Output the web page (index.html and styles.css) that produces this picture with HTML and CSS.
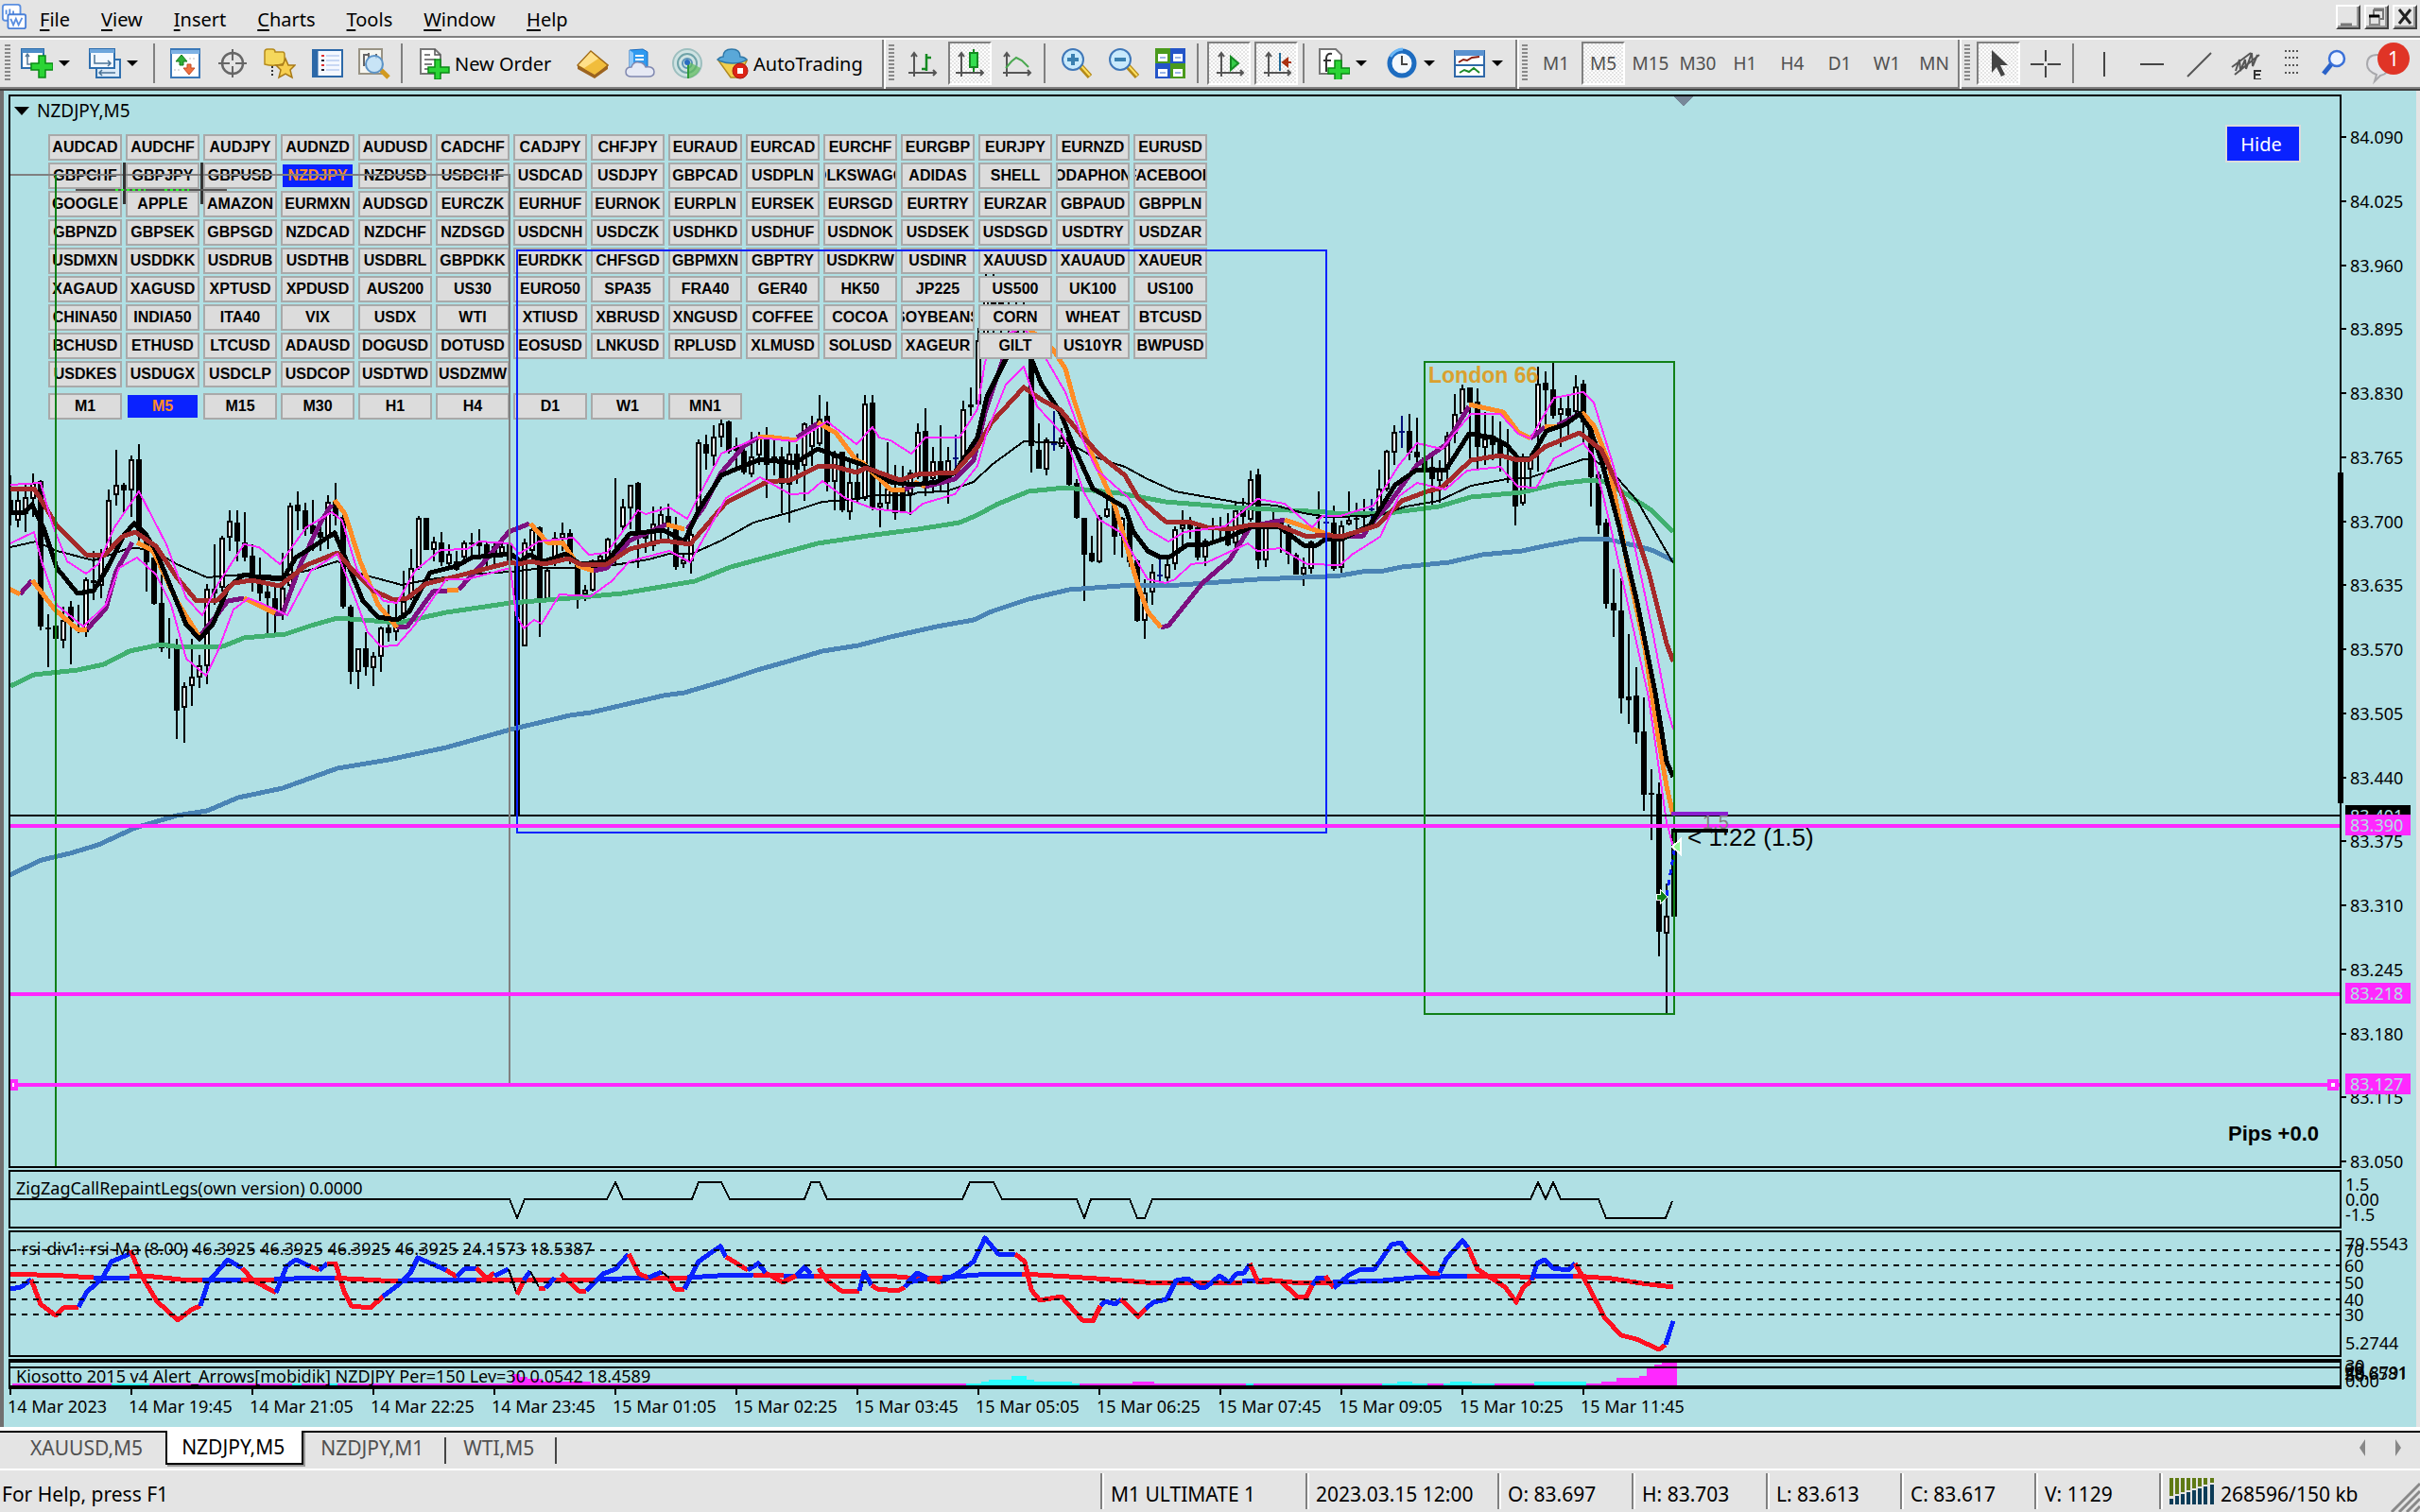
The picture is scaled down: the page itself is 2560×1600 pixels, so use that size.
FILE: index.html
```html
<!DOCTYPE html>
<html lang="en">
<head>
    <meta charset="UTF-8">
    <meta name="viewport" content="width=device-width, initial-scale=1.0">
    <title>NZDJPY,M5</title>
    <link rel="stylesheet" href="styles.css">
</head>
<body>
    <header class="menubar">
        <svg class="app-icon" viewBox="0 0 30 30"><rect x="2" y="1" width="20" height="18" rx="3" fill="#fff" stroke="#5b8fe0" stroke-width="2"/><path d="M6 12v-5M10 14V6M14 12V8" stroke="#5b8fe0" stroke-width="2"/><rect x="8" y="12" width="20" height="16" rx="2" fill="#fff" stroke="#4a80d8" stroke-width="2"/><path d="M11 17l3 7 3-7 3 7 4-8" fill="none" stroke="#5b8fe0" stroke-width="2"/></svg>
        <nav class="menu">
            <button><u>F</u>ile</button>
            <button><u>V</u>iew</button>
            <button><u>I</u>nsert</button>
            <button><u>C</u>harts</button>
            <button><u>T</u>ools</button>
            <button><u>W</u>indow</button>
            <button><u>H</u>elp</button>
        </nav>
        <div class="window-buttons">
            <button aria-label="Minimize"><svg viewBox="0 0 22 22"><path d="M3 19h12" stroke="#777" stroke-width="3"/></svg></button>
            <button aria-label="Restore"><svg viewBox="0 0 22 22"><path d="M8 9V4h10v9h-4" fill="none" stroke="#777" stroke-width="2"/><path d="M8 3h11" stroke="#777" stroke-width="3"/><path d="M4 10h10v9H4z" fill="none" stroke="#888" stroke-width="2"/><path d="M3 10h11" stroke="#000" stroke-width="3"/></svg></button>
            <button aria-label="Close"><svg viewBox="0 0 22 22"><path d="M5 3l12 15M17 3L5 18" stroke="#222" stroke-width="3"/></svg></button>
        </div>
    </header>

    <div class="toolbar">
        <div class="group">
            <span class="grip"></span>
            <button class="drop" aria-label="New chart"><svg class="icon" viewBox="0 0 34 34"><rect x="1" y="2" width="23" height="20" fill="#fff" stroke="#2f6fae" stroke-width="2"/><path d="M1 4h23" stroke="#4d8cc8" stroke-width="4"/><path d="M7 8v10h12M5 10l2-3 2 3" fill="none" stroke="#557a9a" stroke-width="1.5"/><path d="M19 9h7v8h8v7h-8v8h-7v-8h-8v-7h8z" fill="#2bd435" stroke="#0a8a14" stroke-width="1.5"/></svg></button>
            <button class="drop" aria-label="Profiles"><svg class="icon" viewBox="0 0 34 34"><rect x="8" y="13" width="25" height="19" fill="#dcebf8" stroke="#2f6fae" stroke-width="2"/><rect x="1" y="2" width="26" height="20" fill="#f2f8ff" stroke="#2f6fae" stroke-width="2"/><path d="M1 4h26" stroke="#6ea6dc" stroke-width="4"/><path d="M6 8v9h17M20 14l3 3-3 3M12 27h16M14 24l-3 3 3 3" fill="none" stroke="#4a7396" stroke-width="1.5"/></svg></button>
            <span class="sep"></span>
            <button aria-label="Market Watch"><svg class="icon" viewBox="0 0 34 34"><rect x="2" y="2" width="30" height="30" fill="#fff" stroke="#3b78b8" stroke-width="2"/><path d="M2 5h30" stroke="#7eb2e4" stroke-width="4"/><path d="M13 8l6 7h-4v4h-4v-4H7z" fill="#2fae36" stroke="#177a1d"/><path d="M21 29l-6-7h4v-4h4v4h4z" fill="#f07040" stroke="#c44a20"/><path d="M21 12h8M5 24h7" stroke="#bbb" stroke-dasharray="2 2"/></svg></button>
            <button aria-label="Crosshair"><svg class="icon" viewBox="0 0 34 34"><circle cx="17" cy="17" r="11" fill="none" stroke="#666" stroke-width="2.5"/><path d="M17 2v12M17 20v12M2 17h12M20 17h12" stroke="#666" stroke-width="2"/></svg></button>
            <button aria-label="Navigator"><svg class="icon" viewBox="0 0 34 34"><path d="M1 5q0-3 3-3h5q3 0 3 3h8q2 0 2 3v9q-11 4-21 1z" fill="#f5d85c" stroke="#b58a1c" stroke-width="1.5"/><path d="M9 20v11" stroke="#333" stroke-dasharray="2 2" stroke-width="2"/><path d="M23 12l3 7h7l-5 5 2 8-7-4-7 4 2-8-5-5h7z" fill="#f7cf50" stroke="#a87a18" stroke-width="1.5"/></svg></button>
            <button aria-label="Data Window"><svg class="icon" viewBox="0 0 34 34"><rect x="2" y="3" width="31" height="28" fill="#f4f8ff" stroke="#2c68a8" stroke-width="2"/><path d="M5 3v28" stroke="#2c68a8" stroke-width="5"/><path d="M11 9h3M11 19h3" stroke="#e03030" stroke-width="2"/><path d="M11 14h3M11 24h3" stroke="#223" stroke-width="2"/><path d="M16 9h14M16 14h14M16 19h14M16 24h14" stroke="#9bb6e8"/></svg></button>
            <button aria-label="Strategy Tester"><svg class="icon" viewBox="0 0 34 34"><rect x="1" y="2" width="24" height="26" fill="#f6f6f0" stroke="#999384" stroke-width="2"/><path d="M6 7v13M11 6v5M19 7v5M6 8h4" stroke="#666" stroke-width="2"/><path d="M24 24l8 8" stroke="#d29a20" stroke-width="5"/><ellipse cx="17" cy="18" rx="9" ry="9" fill="#bfe0f7" fill-opacity=".85" stroke="#5c94c8" stroke-width="2"/></svg></button>
            <span class="sep"></span>
            <button class="order"><svg class="icon" viewBox="0 0 34 34"><path d="M3 2h15l6 6v20H3z" fill="#fff" stroke="#777" stroke-width="2"/><path d="M18 2v6h6M7 8h6M7 13h12M7 18h8M7 23h5" fill="none" stroke="#555" stroke-width="1.5"/><path d="M18 13h6v8h9v6h-9v7h-6v-7h-7v-6h7z" fill="#2bd435" stroke="#0a8a14" stroke-width="1.5"/></svg>New Order</button>
            <button aria-label="MetaEditor"><svg class="icon" viewBox="0 0 34 34"><path d="M15 4L33 19 19 31 1 19z" fill="#f1bd3c" stroke="#a06a18" stroke-width="1.5"/><path d="M1 19v4l18 10 14-10v-4L19 29z" fill="#9c6420"/><path d="M15 5l8 7-15 10-6-3z" fill="#ffe08a"/></svg></button>
            <button aria-label="MetaQuotes"><svg class="icon" viewBox="0 0 34 34"><path d="M6 3l14-1 5 3v16H6z" fill="#2e9af0" stroke="#1a6cc0"/><path d="M6 3l4 3v15H6z" fill="#8cc8fa"/><path d="M12 9h9M12 13h9" stroke="#fff" stroke-width="2"/><path d="M8 31q-6 0-6-5t6-5q2-6 8-5 5 0 7 5 9-1 9 5 0 5-6 5z" fill="#e6e9f4" stroke="#8088b0" stroke-width="1.5"/></svg></button>
            <button aria-label="Signals"><svg class="icon" viewBox="0 0 34 34"><circle cx="17" cy="17" r="15" fill="#cfe3e3" stroke="#9dbfbf" stroke-width="2"/><circle cx="17" cy="17" r="10" fill="none" stroke="#6fa3a8" stroke-width="2"/><circle cx="17" cy="17" r="5" fill="none" stroke="#5a94b8" stroke-width="2"/><path d="M18 15v18q10-2 13-11z" fill="#5cba58" fill-opacity=".7"/><path d="M18 16v17" stroke="#2f9a38" stroke-width="2"/><circle cx="17" cy="16" r="3" fill="#2a6cc0"/></svg></button>
            <button class="order auto"><svg class="icon" viewBox="0 0 34 34"><path d="M2 14h30l-9 18h-8z" fill="#f2cf4c" stroke="#b08a20" stroke-width="1.5"/><path d="M1 13q3-3 6-3 0-8 9-8t9 8q4 0 7 3-5 4-15 4T1 13z" fill="#5aa8d8" stroke="#2f78a8" stroke-width="1.5"/><circle cx="25" cy="25" r="8" fill="#dd2416" stroke="#a81a10"/><path d="M22 22h6v6h-6z" fill="#fff"/></svg>AutoTrading</button>
        </div>
        <div class="group">
            <span class="grip"></span>
            <button aria-label="Bar chart"><svg class="icon" viewBox="0 0 34 34"><path d="M8 7v24M2 27h29M5 10l3-4 3 4M28 24l3 3-3 3" fill="none" stroke="#555" stroke-width="2"/><path d="M21 7v18M21 11h5M21 23h-5" stroke="#158a22" stroke-width="2.5"/></svg></button>
            <button class="pressed" aria-label="Candlesticks"><svg class="icon" viewBox="0 0 34 34"><path d="M8 7v24M2 27h29M5 10l3-4 3 4M28 24l3 3-3 3" fill="none" stroke="#555" stroke-width="2"/><path d="M21 2v24" stroke="#158a22" stroke-width="2"/><rect x="17" y="6" width="8" height="15" fill="#35dd50" stroke="#158a22" stroke-width="2"/></svg></button>
            <button aria-label="Line chart"><svg class="icon" viewBox="0 0 34 34"><path d="M6 7v24M2 27h29M3 10l3-4 3 4M28 24l3 3-3 3" fill="none" stroke="#555" stroke-width="2"/><path d="M5 22l6-7 5-4 6 3 7 7" fill="none" stroke="#4aa850" stroke-width="2"/></svg></button>
            <span class="sep"></span>
            <button aria-label="Zoom In"><svg class="icon" viewBox="0 0 34 34"><path d="M22 20l10 11" stroke="#b58a18" stroke-width="6"/><path d="M23 20l9 10" stroke="#ffe060" stroke-width="2"/><circle cx="14" cy="13" r="11" fill="#c8eafc" stroke="#4078b8" stroke-width="2"/><path d="M14 7v12M8 13h12" stroke="#3a80b0" stroke-width="4"/></svg></button>
            <button aria-label="Zoom Out"><svg class="icon" viewBox="0 0 34 34"><path d="M22 20l10 11" stroke="#b58a18" stroke-width="6"/><path d="M23 20l9 10" stroke="#ffe060" stroke-width="2"/><circle cx="14" cy="13" r="11" fill="#c8eafc" stroke="#4078b8" stroke-width="2"/><path d="M8 13h12" stroke="#3a80b0" stroke-width="4"/></svg></button>
            <button aria-label="Tile Windows"><svg class="icon" viewBox="0 0 34 34"><path d="M1 1h16v16H1z" fill="#4a9a1c"/><path d="M17 1h16v16H17z" fill="#2455c8"/><path d="M1 17h16v16H1z" fill="#2455c8"/><path d="M17 17h16v16H17z" fill="#4a9a1c"/><path d="M4 7h10v8H4zM20 7h10v8H20zM4 23h10v8H4zM20 23h10v8H20z" fill="#fff"/><path d="M6 11h6M22 11h6M6 27h6M22 27h6" stroke="#9bb6e8" stroke-width="2"/></svg></button>
            <span class="sep"></span>
            <button class="pressed" aria-label="Auto Scroll"><svg class="icon" viewBox="0 0 34 34"><path d="M9 7v24M4 27h28M6 10l3-4 3 4M29 24l3 3-3 3" fill="none" stroke="#555" stroke-width="2"/><path d="M19 10l8 7-8 7z" fill="#35cc48" stroke="#158a22" stroke-width="2"/></svg></button>
            <button class="pressed" aria-label="Chart Shift"><svg class="icon" viewBox="0 0 34 34"><path d="M9 7v24M4 27h28M6 10l3-4 3 4M29 24l3 3-3 3" fill="none" stroke="#555" stroke-width="2"/><path d="M21 6v19" stroke="#1d6a98" stroke-width="2"/><path d="M33 16h-7M29 12l-5 4 5 4z" fill="#e04818" stroke="#a83010" stroke-width="2"/></svg></button>
            <span class="sep"></span>
            <button class="drop" aria-label="Indicators"><svg class="icon" viewBox="0 0 34 34"><path d="M2 2h17l6 6v20H2z" fill="#fff" stroke="#777" stroke-width="2"/><path d="M15 7q-6-1-6 5v14M6 14h8" fill="none" stroke="#333" stroke-width="2"/><path d="M18 14h7v8h9v6h-9v7h-7v-7h-7v-6h7z" fill="#2bd435" stroke="#0a8a14" stroke-width="1.5"/></svg></button>
            <button class="drop" aria-label="Periods"><svg class="icon" viewBox="0 0 34 34"><circle cx="17" cy="17" r="13" fill="#f4f8fc" stroke="#1d6cc0" stroke-width="5"/><path d="M5 10q5-8 13-8" fill="none" stroke="#6ab8f8" stroke-width="3"/><path d="M17 9v9h6" fill="none" stroke="#444" stroke-width="2"/></svg></button>
            <button class="drop" aria-label="Templates"><svg class="icon" viewBox="0 0 34 34"><rect x="1" y="4" width="31" height="27" fill="#fff" stroke="#2f68a8" stroke-width="2"/><path d="M1 6h31" stroke="#5a92d0" stroke-width="6"/><path d="M1 19h31" stroke="#2f68a8" stroke-width="2"/><path d="M5 16l5-3 4 1 5-3 8-1" fill="none" stroke="#8a1c10" stroke-width="2"/><path d="M6 27l5-3 5 2 5-4 6 5" fill="none" stroke="#1c8a28" stroke-width="2"/></svg></button>
        </div>
        <div class="group periods">
            <span class="grip"></span>
            <button>M1</button><button class="pressed">M5</button><button>M15</button><button>M30</button><button>H1</button><button>H4</button><button>D1</button><button>W1</button><button>MN</button>
        </div>
        <div class="group">
            <span class="grip"></span>
            <button class="pressed" aria-label="Cursor"><svg class="icon" viewBox="0 0 34 34"><path d="M10 3v24l5-6 5 10 4-2-5-10h8z" fill="#444"/></svg></button>
            <button aria-label="Crosshair"><svg class="icon" viewBox="0 0 34 34"><path d="M17 3v12M17 20v12M1 18h14M19 18h14" stroke="#444" stroke-width="2"/></svg></button>
            <span class="sep"></span>
            <button aria-label="Vertical line"><svg class="icon" viewBox="0 0 34 34"><path d="M17 5v26" stroke="#444" stroke-width="2"/></svg></button>
            <button aria-label="Horizontal line"><svg class="icon" viewBox="0 0 34 34"><path d="M5 18h25" stroke="#444" stroke-width="2"/></svg></button>
            <button aria-label="Trendline"><svg class="icon" viewBox="0 0 34 34"><path d="M5 31L30 6" stroke="#555" stroke-width="2"/></svg></button>
            <button aria-label="Equidistant channel"><svg class="icon" viewBox="0 0 34 34"><path d="M2 21L22 6M5 29L31 8M6 25l4-12 1 12 5-12 1 10 6-17 1 14 5-12" fill="none" stroke="#555" stroke-width="2"/><path d="M33 25h-7v9h7M26 29h6" fill="none" stroke="#333" stroke-width="2"/></svg></button>
            <button class="narrow" aria-label="Fibonacci"><svg class="icon" viewBox="0 0 34 34"><path d="M10 4h15M10 11h15M10 19h15M10 27h15" stroke="#555" stroke-width="2" stroke-dasharray="2 2"/></svg></button>
            <button class="narrow" aria-label="Search"><svg class="icon" viewBox="0 0 34 34"><path d="M14 17L5 28" stroke="#2a62c8" stroke-width="5"/><circle cx="19" cy="12" r="8" fill="#eef4ff" stroke="#3a70d8" stroke-width="2.5"/></svg></button>
            <button class="chat" aria-label="Messages"><svg viewBox="0 0 50 46"><path d="M12 42l2-7q-10-4-10-11 0-10 11-10t13 9q0 11-10 13z" fill="#e4e4e8" stroke="#a8a8ac" stroke-width="2"/><ellipse cx="32" cy="18" rx="17" ry="17" fill="#e03426"/><text x="32" y="26" text-anchor="middle" class="badge-text">1</text></svg></button>
        </div>
    </div>

    <main class="chart-window">
        <section class="pane">
            <svg class="plot" id="priceBack" viewBox="11 102 2464 1132" preserveAspectRatio="none">
                <g id="candles"></g>
                <g id="averages"></g>
            </svg>
            <h1 class="chart-title">NZDJPY,M5</h1>
            <div class="symbols" id="symbols"></div>
            <button class="hide-button">Hide</button>
            <div class="pips">Pips +0.0</div>
            <svg class="plot front" viewBox="11 102 2464 1132" preserveAspectRatio="none">
                <path d="M1771 102h20l-10 11z" fill="#778899"/>
                <path d="M11 863H2475" class="bid"/>
                <path d="M11 185H539V1147" class="grey"/>
                <path d="M59 185V1235" class="session green"/>
                <path d="M131 172v44M213 172v44" stroke="#333" stroke-width="3"/>
                <path d="M80 201h160" stroke="#555" stroke-width="2"/>
                <path d="M122 201h32M174 201h26" stroke="#28ff28" stroke-width="2" stroke-dasharray="3 3"/>
                <rect x="547" y="265" width="856" height="616" class="session blue"/>
                <rect x="1507" y="383" width="264" height="690" class="session green"/>
                <path d="M11 874H2475M11 1052H2475M11 1148H2475" class="level"/>
                <path d="M11 1144h6v8h-6zM2464 1144h8v8h-8z" fill="#fff" stroke="#ff28ff" stroke-width="4"/>
                <path d="M1768 861h60" stroke="#8a1fd0" stroke-width="4"/>
                <path d="M1769 879h59" stroke="#000" stroke-width="4"/>
                <path d="M1763 948l8-48" stroke="#0a22ff" stroke-width="3" stroke-dasharray="6 5"/>
                <path d="M1752 946h4v-5l8 8-8 8v-5h-4z" fill="#108018" stroke="#fff" stroke-width="1"/>
                <path d="M1769 896l9-8v16z" fill="#98fb98" stroke="#fff" stroke-width="2"/>
                <text x="1511" y="405" class="london">London 66</text>
                <text x="1801" y="877" class="small-note">1.5</text>
                <text x="1785" y="895" class="note">&lt; 1:22 (1.5)</text>
            </svg>
        </section>
        <aside class="axis price-axis" id="priceAxis">
            <span class="range-bar"></span>
            <span class="tag tag-bid">83.401</span>
            <span class="tag tag-a">83.390</span>
            <span class="tag tag-b">83.218</span>
            <span class="tag tag-c">83.127</span>
        </aside>

        <section class="pane">
            <svg class="plot" id="zigzag" viewBox="11 1240 2464 58" preserveAspectRatio="none"></svg>
            <p class="pane-label">ZigZagCallRepaintLegs(own version) 0.0000</p>
        </section>
        <aside class="axis zig-axis"><span>1.5</span><span>0.00</span><span>-1.5</span></aside>

        <section class="pane">
            <svg class="plot" id="rsi" viewBox="11 1304 2464 130" preserveAspectRatio="none"></svg>
            <p class="pane-label">-rsi-div1:-rsi-Ma (8.00) 46.3925 46.3925 46.3925 46.3925 24.1573 18.5387</p>
        </section>
        <aside class="axis">
            <svg class="axis-text" viewBox="0 0 79 134">
                <text x="4" y="21">79.5543</text><text x="3" y="28">70</text><text x="3" y="44">60</text><text x="3" y="62">50</text><text x="3" y="80">40</text><text x="3" y="96">30</text><text x="4" y="126">5.2744</text>
            </svg>
        </aside>

        <section class="pane histogram">
            <svg class="plot" id="kiosotto" viewBox="11 1442 2464 24" preserveAspectRatio="none"></svg>
            <p class="pane-label">Kiosotto 2015 v4 Alert_Arrows[mobidik] NZDJPY Per=150 Lev=30 0.0542 18.4589</p>
        </section>
        <aside class="axis">
            <svg class="axis-text" viewBox="0 0 79 32">
                <text x="4" y="14">30</text><text x="3" y="17">60</text><text x="4" y="21">40.8791</text><text x="3" y="22">28.6581</text><text x="4" y="24">50</text><text x="4" y="30">0.00</text>
            </svg>
        </aside>

        <ol class="time-axis">
            <li>14 Mar 2023</li><li>14 Mar 19:45</li><li>14 Mar 21:05</li><li>14 Mar 22:25</li><li>14 Mar 23:45</li><li>15 Mar 01:05</li><li>15 Mar 02:25</li><li>15 Mar 03:45</li><li>15 Mar 05:05</li><li>15 Mar 06:25</li><li>15 Mar 07:45</li><li>15 Mar 09:05</li><li>15 Mar 10:25</li><li>15 Mar 11:45</li>
        </ol>
    </main>

    <nav class="tabs">
        <button>XAUUSD,M5</button>
        <button class="active">NZDJPY,M5</button>
        <button>NZDJPY,M1</button>
        <button>WTI,M5</button>
        <span class="tab-scroll"><svg viewBox="0 0 50 20"><path d="M8 1v18L2 10zM40 1v18l6-9z" fill="#888"/></svg></span>
    </nav>

    <footer class="statusbar">
        <span class="help">For Help, press F1</span>
        <span class="cell profile">M1 ULTIMATE 1</span>
        <span class="cell date">2023.03.15 12:00</span>
        <span class="cell">O: 83.697</span>
        <span class="cell">H: 83.703</span>
        <span class="cell">L: 83.613</span>
        <span class="cell">C: 83.617</span>
        <span class="cell volume">V: 1129</span>
        <span class="cell traffic">
            <svg viewBox="0 0 48 28"><path d="M2 0v19M8 0v17M14 0v15M20 0v13M26 0v11M32 0v9M38 0v7M45 0v5" stroke="#5f7a14" stroke-width="4"/><path d="M2 28v-6M8 28v-9M14 28v-11M20 28v-13M26 28v-15M32 28v-17M38 28v-19M45 28V7" stroke="#0c3c58" stroke-width="4"/></svg>
            268596/150 kb
        </span>
        <svg class="size-grip" viewBox="0 0 32 32"><path d="M2 32L32 2M10 32L32 10M18 32l14-14M26 32l6-6" stroke="#888" stroke-width="3"/></svg>
    </footer>

    <script src="script.js"></script>
</body>
</html>
```
FILE: styles.css
```css
* {
    box-sizing: border-box;
}
body {
    display: flex;
    flex-direction: column;
    height: 100vh;
    margin: 0;
    overflow: hidden;
    background-color: #e4e4e4;
    color: #000;
    font-family: "Noto Sans", "DejaVu Sans", sans-serif;
    font-size: 20px;
}
button {
    margin: 0;
    padding: 0;
    border: none;
    background: none;
    color: inherit;
    font: inherit;
}

/* Menu */
.menubar {
    display: flex;
    align-items: center;
    height: 42px;
    border-bottom: 2px solid #fff;
    box-shadow: inset 0 -2px #808080;
}
.app-icon {
    width: 28px;
    height: 30px;
    margin: 0 0 4px 1px;
}
.menu {
    display: flex;
    flex: 1;
}
.menu button {
    padding: 2px 17px 0 16px;
    line-height: 38px;
}
.menu button:first-child {
    padding-left: 13px;
}
.menu u {
    text-underline-offset: 3px;
}
.window-buttons {
    display: flex;
    gap: 4px;
    padding: 0 3px 4px 0;
}
.window-buttons button {
    width: 26px;
    height: 26px;
    border: 2px solid;
    border-color: #fff #444 #444 #fff;
    box-shadow: inset -2px -2px #999;
}
.window-buttons svg {
    display: block;
    width: 22px;
    height: 22px;
}

/* Toolbar */
.toolbar {
    display: flex;
    height: 54px;
    border-bottom: 2px solid #404040;
    box-shadow: inset 0 -2px #808080;
}
.group {
    display: flex;
    align-items: center;
    padding-bottom: 2px;
    border-right: 2px solid #808080;
    box-shadow: 2px 0 #fff;
}
.group:last-child {
    flex: 1;
    border-right: none;
}
.grip {
    width: 6px;
    height: 40px;
    margin: 0 4px 0 5px;
    background: repeating-linear-gradient(#888 0 2px, transparent 2px 4px);
}
.group + .group .grip {
    margin: 0 5px;
}
.group button {
    display: flex;
    align-items: center;
    justify-content: center;
    width: 46px;
    height: 46px;
    margin: 0 2px;
}
.group .narrow {
    margin: 0;
}
.group .drop {
    justify-content: flex-start;
    width: 72px;
    margin: 0;
    padding-left: 7px;
}
.drop::after {
    content: "";
    margin-left: 6px;
    border: 6px solid transparent;
    border-top-color: #000;
    border-bottom: none;
}
.group .order {
    justify-content: flex-start;
    gap: 5px;
    width: auto;
    min-width: 165px;
    padding-left: 7px;
}
.group .auto {
    min-width: 177px;
    padding-left: 4px;
}
.group .pressed {
    border: 2px solid;
    border-color: #808080 #fff #fff #808080;
    background: repeating-conic-gradient(#fff 0 25%, #e4e4e4 0 50%) 0 0 / 4px 4px;
}
.icon {
    flex: none;
    width: 34px;
    height: 34px;
}
.sep {
    width: 2px;
    height: 42px;
    margin: 0 7px 0 3px;
    background-color: #808080;
}
.periods {
    color: #505050;
    font-size: 19px;
}
.group .chat {
    width: 50px;
    margin: 0 10px 0 auto;
}
.chat svg {
    width: 50px;
    height: 46px;
}
.badge-text {
    fill: #fff;
    font-size: 21px;
}

/* Chart window */
.chart-window {
    display: grid;
    flex: 1;
    grid-template-columns: 1fr 79px;
    grid-template-rows: 1fr 62px 134px 32px 38px;
    row-gap: 2px;
    min-height: 0;
    padding: 4px 0 0 5px;
    border: solid #707070;
    border-width: 0 4px 0 4px;
    border-right-color: #e4e4e4;
    background-color: #b0e0e4;
}
.pane {
    position: relative;
    border: 2px solid #000;
}
.histogram {
    border-width: 4px 2px;
}
.plot {
    position: absolute;
    inset: 0;
    width: 100%;
    height: 100%;
    shape-rendering: crispEdges;
}
.front {
    pointer-events: none;
}
.chart-title {
    position: absolute;
    top: 2px;
    left: 4px;
    display: flex;
    align-items: center;
    gap: 8px;
    margin: 0;
    font-size: 19px;
    font-weight: normal;
    line-height: 26px;
}
.chart-title::before {
    content: "";
    border: 8px solid transparent;
    border-top: 9px solid #000;
    border-bottom: none;
}
.symbols {
    position: absolute;
    top: 40px;
    left: 40px;
    display: grid;
    grid-template-columns: repeat(15, 78px);
    gap: 2px 4px;
    font: bold 16px "Liberation Sans", Arial, sans-serif;
}
.symbols button {
    display: flex;
    align-items: center;
    justify-content: center;
    height: 28px;
    overflow: hidden;
    border: 2px solid #a9a9a9;
    background-color: #dcdcdc;
    white-space: nowrap;
}
.symbols .active {
    border-color: #b0e0e4;
    background-color: #0a22ff;
    color: #ff8c26;
}
.symbols span {
    flex: none;
}
.symbols .first-period {
    grid-column: 1;
}
.symbols .period {
    margin-top: 4px;
}
.hide-button {
    position: absolute;
    top: 30px;
    right: 41px;
    width: 80px;
    height: 40px;
    padding-right: 4px;
    border: 2px solid #dcdcdc;
    background-color: #0a22ff;
    color: #fff;
}
.pips {
    position: absolute;
    right: 22px;
    bottom: 20px;
    font: bold 22px/28px "Liberation Sans", Arial, sans-serif;
}
.bid,
.grey {
    fill: none;
    stroke: #000;
    stroke-width: 2;
}
.grey {
    stroke: #808080;
}
.session {
    fill: none;
    stroke-width: 2;
}
.blue {
    stroke: #0a22ff;
}
.green {
    stroke: #108018;
}
.level {
    stroke: #ff28ff;
    stroke-width: 4;
}
.london {
    fill: #daa02e;
    font: bold 23px "Liberation Sans", Arial, sans-serif;
}
.note,
.small-note {
    font: 26px "Liberation Sans", Arial, sans-serif;
}
.small-note {
    fill: #808080;
    font-size: 20px;
}
.pane-label {
    position: absolute;
    top: 5px;
    left: 6px;
    margin: 0;
    font-size: 18px;
    line-height: 24px;
    white-space: nowrap;
}
.histogram .pane-label {
    top: 2px;
}

/* Candles and averages */
.wick,
.bear {
    fill: #000;
}
.bull {
    fill: #fff;
    stroke: #000;
    stroke-width: 2;
}
.doji {
    fill: #00107a;
}
.series {
    fill: none;
    stroke-linejoin: round;
}

/* Axes */
.axis {
    position: relative;
    font-size: 18px;
}
.price-axis {
    display: flex;
    flex-direction: column;
    justify-content: space-between;
    padding: 34px 0 0 0;
    margin-bottom: -4px;
}
.price-label {
    display: flex;
    align-items: center;
    gap: 4px;
    height: 22px;
    line-height: 22px;
}
.price-label::before {
    content: "";
    width: 5px;
    height: 2px;
    background-color: #000;
}
.range-bar {
    position: absolute;
    top: 400px;
    left: -4px;
    width: 6px;
    height: 350px;
    background-color: #000;
}
.tag {
    position: absolute;
    left: 4px;
    width: 69px;
    height: 22px;
    padding-left: 5px;
    background-color: #ff28ff;
    color: #b0e0e4;
    line-height: 22px;
}
.tag-bid {
    top: 752px;
    background-color: #000;
}
.tag-a {
    top: 762px;
}
.tag-b {
    top: 940px;
}
.tag-c {
    top: 1036px;
}
.zig-axis {
    display: flex;
    flex-direction: column;
    padding: 7px 0 0 4px;
    line-height: 16px;
}
.axis-text {
    display: block;
    width: 79px;
    height: 100%;
}
.time-axis {
    display: flex;
    grid-column: 1 / -1;
    margin: -2px 0 0 0;
    padding: 0 0 0 1px;
    list-style: none;
    font-size: 18px;
}
.time-axis li {
    position: relative;
    width: 128px;
    padding-top: 5px;
    line-height: 26px;
    text-indent: -2px;
    white-space: nowrap;
}
.time-axis li::before {
    content: "";
    position: absolute;
    top: 0;
    left: 0;
    width: 2px;
    height: 6px;
    background-color: #000;
}

/* Chart tabs */
.tabs {
    display: flex;
    align-items: flex-start;
    height: 46px;
    padding: 0 0 0 4px;
    border-top: 4px solid #fff;
    border-bottom: 2px solid #fff;
    box-shadow: inset 0 2px #000;
    color: #505050;
    font-size: 21px;
}
.tabs button {
    position: relative;
    height: 36px;
    padding: 0 24px 0 18px;
    line-height: 34px;
}
.tabs button:first-child {
    padding-left: 28px;
}
.tabs .active {
    padding: 0 18px 0 15px;
    border: 2px solid #000;
    border-top: none;
    background-color: #fff;
    box-shadow: 2px 2px #999;
    color: #000;
}
.tabs .active + button::after,
.tabs .active + button + button::after {
    content: "";
    position: absolute;
    top: 7px;
    right: 0;
    width: 2px;
    height: 28px;
    background-color: #444;
}
.tab-scroll {
    margin: 8px 16px 0 auto;
}
.tab-scroll svg {
    display: block;
    width: 50px;
    height: 20px;
}

/* Status bar */
.statusbar {
    position: relative;
    display: flex;
    align-items: center;
    height: 44px;
    font-size: 21px;
}
.help {
    flex: 1;
    padding: 5px 0 0 2px;
}
.cell {
    display: flex;
    align-items: center;
    gap: 6px;
    width: 142px;
    height: 38px;
    padding: 5px 0 0 9px;
    border-left: 2px solid #808080;
    box-shadow: inset 2px 0 #fff;
    white-space: nowrap;
}
.profile {
    width: 217px;
}
.date {
    width: 203px;
}
.volume {
    width: 132px;
}
.traffic {
    width: 276px;
}
.traffic svg {
    width: 48px;
    height: 28px;
    margin-bottom: 6px;
}
.size-grip {
    position: absolute;
    right: 0;
    bottom: 0;
    width: 32px;
    height: 32px;
}
```
FILE: script.js
```javascript
const SVG = 'http://www.w3.org/2000/svg';

// origin x, origin y, units per pixel in x and y
const PARTS = {
    a: [0, 440, 1.823, 2.8],
    b: [700, 340, 2.063, 3],
    c: [1380, 360, 2.613, 2.119],
    d: [0, 1220, 1.568, 3],
    e: [960, 1220, 1.867, 3]
};

// type high top bottom low   (w = up, k = down, n = flat)
const BARS = {
    a: `k 175 250 290 325|w 222 250 312 330|w 205 240 290 345|w 172 200 245 300|k 190 192 625 635|k 588 626 633 745|k 540 622 660 662|w 565 605 665 690|k 548 565 610 735|k 560 626 633 645|w 480 485 640 655|k 400 488 496 545|w 395 405 505 540|w 218 248 400 405|w 100 203 235 265|k 200 203 222 290|w 118 130 222 300|k 85 130 355 370|k 350 355 435 520|k 415 420 558 560|k 470 555 690 700|k 600 684 690 720|k 660 690 873 957|w 790 802 866 968|w 660 773 800 860|w 708 740 775 805|w 498 512 742 795|k 380 512 525 560|w 355 360 510 520|w 280 310 362 400|k 280 315 373 430|k 285 375 420 430|k 380 413 480 520|k 420 490 525 550|k 490 522 540 645|k 500 540 587 645|w 405 510 590 605|w 258 265 505 510|k 225 263 284 340|k 258 280 335 355|k 250 325 350 400|k 310 345 360 400|w 235 255 360 395|k 200 255 298 325|k 295 300 565 570|k 560 566 760 795|w 688 690 760 810|k 640 690 745 770|w 700 712 748 800|w 625 628 715 760|k 560 628 643 668|w 545 625 640 665|w 460 550 600 610|w 395 450 540 545|w 297 303 452 455|k 303 303 397 397|w 358 372 397 430|k 345 375 435 445|w 380 410 440 450|k 400 430 455 460|w 370 375 420 440|k 348 375 381 420|k 335 375 385 420|k 375 380 410 450|k 375 385 410 440|w 376 385 410 420|k 376 380 440 445|k 400 430 1185 1185|w 365 375 682 684|w 320 335 400 440|k 328 330 545 655|w 450 455 545 546|w 345 360 420 445|w 315 348 365 400|k 337 348 430 440|k 425 430 535 570|w 500 516 530 548|w 425 430 518 520|w 410 415 440 450|w 362 365 430 435|k 185 408 412 440|w 245 270 330 345|w 203 203 275 335|k 195 200 350 450|k 340 345 365 405|w 270 320 385 400|w 270 290 330 375|k 260 297 325 370|k 300 330 448 455|w 410 425 440 450|w 345 350 430 468`,
    b: `w 375 385 600 600|k 360 390 420 470|w 330 367 430 460|w 312 325 370 400|k 314 318 415 420|k 370 395 410 470|k 395 410 480 485|w 350 430 485 495|w 350 370 425 455|k 335 375 455 560|k 370 430 440 490|k 400 430 515 610|w 370 420 520 640|k 390 420 470 515|w 322 325 460 570|w 300 330 400 460|w 235 308 390 395|k 255 300 510 540|w 410 430 510 600|k 414 415 600 605|w 450 510 605 630|k 420 510 565 575|w 235 260 565 570|k 235 258 592 600|w 480 575 590 655|w 385 530 578 600|k 455 530 608 630|k 460 535 608 610|w 470 480 550 615|w 325 350 495 500|k 275 348 520 555|w 400 445 500 545|k 330 445 505 540|w 400 440 510 580|n 360 433 437 480|w 253 280 440 445|k 210 264 273 300|w 20 60 265 270|w -160 -130 60 120|k -160 -120 0 60|w -80 -60 20 60|k -60 -40 30 60|w -80 -40 40 60|k -70 -30 30 60|k -40 40 395 480|k 325 408 468 468|w 368 375 470 490|n 285 388 392 412|w 340 368 400 405|k 360 365 520 522|k 500 512 625 628|k 624 625 742 887|k 680 735 762 765|w 615 620 765 768|w 540 595 622 625|k 570 580 685 740|w 620 625 680 750|k 635 640 765 780|k 755 760 952 954|w 820 860 952 1007|w 770 795 860 900|n 750 803 807 830|w 740 770 815 825|w 650 660 770 790|w 600 645 660 720|k 620 635 660 690|k 650 655 750 760|w 690 695 750 778|k 625 653 657 700|k 620 650 660 690|k 610 655 710 715|w 575 600 705 720|k 560 600 620 700|w 475 500 630 635|k 468 487 760 785|w 635 640 760 780|k 590 630 640 655|k 635 640 650 735|k 645 650 740 770|k 735 740 803 805|w 750 780 803 840|w 695 700 785 800`,
    c: `k 340 397 401 430|n 390 406 412 420|k 370 410 512 518|w 405 415 510 522|w 340 402 413 415|k 365 399 402 425|k 355 394 398 440|n 355 378 381 400|w 290 332 380 385|w 245 248 335 340|w 190 205 252 280|n 170 204 207 242|k 165 203 252 270|k 173 250 262 275|k 255 262 295 300|k 260 285 312 370|w 270 290 315 365|w 205 215 290 330|w 120 165 210 230|w 100 108 165 170|k 105 106 140 270|k 108 138 240 288|w 160 220 242 280|k 170 215 235 270|k 182 225 255 295|k 200 263 266 320|k 265 270 373 415|w 255 270 367 370|w 255 262 290 330|w 60 98 210 295|k 70 95 113 200|k 50 110 170 175|w 125 153 168 240|k 122 153 170 215|w 78 103 160 170|k 90 97 185 230|k 185 190 308 373|k 295 300 415 435|k 400 410 592 602|k 512 590 605 665|k 535 605 803 838|w 660 798 808 860|k 733 797 880 905|k 800 878 1020 1055|k 962 1014 1019 1122|k 992 1018 1326 1382|w 1218 1290 1330 1510|k 1095 1095 1292 1292`
};

const PURPLE = '#7d1080', ORANGE = '#ff8c26', PINK = '#ff28ff', RED = '#ff1020', BLUE = '#0a22ff';

// colour, width, points per part
const AVERAGES = [
    ['#4a84b5', 5, 'a 18,1362 80,1315 135,1297 190,1270 260,1220 340,1185 400,1170 460,1132 545,1102 650,1045 750,1020 860,982 985,930 1100,888 1140,880 1280,828 1320,820 1400,785 1460,752 b 275,1080 350,1048 430,1030 500,1002 600,970 680,948 720,920 800,882 890,853 1000,840 1130,838 1300,820 1450,810 c 100,527 160,520 220,518 270,508 400,497 490,480 600,472 660,463 770,445 830,445 920,462 960,470 1018,493'],
    ['#40b070', 5, 'a 20,800 65,768 150,752 200,735 250,698 310,677 350,685 430,683 470,658 550,648 600,622 650,600 770,612 860,583 985,555 1100,540 1200,525 1340,490 b 150,780 340,705 450,680 560,660 650,640 690,615 730,582 800,540 880,527 1000,545 1100,573 1250,592 1450,606 c 100,390 230,387 370,372 460,352 600,342 700,323 790,313 830,318 900,350 960,382 1018,430'],
    ['#000', 2, 'a 20,388 70,372 110,400 180,428 250,393 290,395 340,440 400,480 470,470 540,476 600,455 650,432 700,470 775,500 830,485 900,470 985,462 1050,450 1150,452 1250,425 1290,410 1335,410 b 130,695 200,640 280,605 350,573 430,565 460,553 545,553 560,543 620,540 680,510 720,455 790,380 890,387 940,430 1010,463 1060,502 1120,540 1260,577 1340,585 1400,610 1450,620 c 100,397 210,393 280,372 370,360 460,327 560,312 620,310 680,292 770,267 800,270 850,295 920,360 1018,500'],
    [PURPLE, 5, 'a 38,528 62,488'],
    [PURPLE, 5, 'a 168,632 205,570 225,460 255,375'],
    [PURPLE, 5, 'a 385,655 440,550 470,540'],
    [PURPLE, 5, 'a 530,585 545,585 580,440 620,310 640,262'],
    [PURPLE, 5, 'a 765,628 785,625 835,520 862,518'],
    [PURPLE, 5, 'a 885,515 930,440 980,345 1020,320'],
    [PURPLE, 5, 'a 1145,460 1170,450 1215,370 1285,322'],
    [PURPLE, 5, 'b 55,660 90,590 130,480 180,395 210,370'],
    [PURPLE, 5, 'b 295,370 340,325'],
    [PURPLE, 5, 'b 530,535 550,520'],
    [PURPLE, 5, 'b 575,525 640,500 680,440 705,290 745,120 770,30'],
    [PURPLE, 5, 'b 1090,972 1105,965 1180,830 1240,755 1285,650 1360,630'],
    [PURPLE, 5, 'b 1470,685 1530,680 c 180,415 230,370 310,280 390,235 455,148'],
    [PURPLE, 5, 'c 625,220 665,195'],
    [PURPLE, 5, 'c 700,190 760,165'],
    [ORANGE, 5, 'a 18,512 38,528'],
    [ORANGE, 5, 'a 62,488 105,575 150,632 168,632'],
    [ORANGE, 5, 'a 265,375 295,400 340,550 385,655'],
    [ORANGE, 5, 'a 470,540 530,585'],
    [ORANGE, 5, 'a 645,250 665,290 695,430 730,560 765,628'],
    [ORANGE, 5, 'a 862,515 885,515'],
    [ORANGE, 5, 'a 1022,318 1055,375 1085,375 1115,445 1145,460'],
    [ORANGE, 5, 'a 1285,322 1320,337'],
    [ORANGE, 5, 'b 210,365 245,370 295,377'],
    [ORANGE, 5, 'b 340,322 380,355 425,440 440,450 500,533 530,535'],
    [ORANGE, 5, 'b 550,510 575,525'],
    [ORANGE, 5, 'b 790,10 855,90 880,150 900,250 940,430 990,590 1040,840 1060,920 1090,972'],
    [ORANGE, 5, 'b 1360,630 1400,650 1470,685'],
    [ORANGE, 5, 'c 455,145 550,160 590,205 625,220'],
    [ORANGE, 5, 'c 665,192 700,192'],
    [ORANGE, 5, 'c 765,160 800,190 840,270 870,400 890,500 940,690 980,900 1000,1000 1018,1065'],
    ['#000', 5, 'a 20,285 45,287 62,262 85,340 110,450 150,525 180,518 205,460 240,350 258,320 280,350 300,400 330,510 360,620 385,662 410,620 440,510 470,470 500,480 545,485 570,420 645,348 670,440 700,550 730,597 765,605 790,580 830,465 880,445 910,420 985,410 1005,430 1020,412 1050,430 1090,410 1120,440 1170,430 1215,350 1280,338 1320,372 b 80,600 130,490 180,460 215,438 290,450 340,405 370,420 440,455 500,510 550,520 600,510 640,480 690,370 710,240 750,120 790,60 805,110 830,200 870,290 900,400 940,530 1010,590 1030,670 1060,730 1090,750 1110,748 1150,708 1185,712 1240,685 1290,650 1350,655 1400,710 1430,712 c 60,445 100,447 180,415 250,325 310,290 390,292 455,210 520,218 560,235 590,265 625,265 670,203 720,188 760,165 790,200 820,270 870,420 920,590 970,790 1000,945 1018,978'],
    ['#a52a2a', 5, 'a 20,215 65,215 110,325 165,412 200,415 235,358 260,345 300,385 340,480 380,548 420,545 450,495 485,487 540,503 590,442 650,405 680,455 720,518 760,545 785,540 820,498 900,468 985,435 1000,440 1022,430 1050,440 1095,422 1120,440 1170,440 1215,395 1280,370 1330,380 b 140,575 230,510 280,505 345,458 380,462 425,480 445,465 520,505 560,487 640,480 690,400 720,320 790,210 830,250 870,283 920,370 960,430 1010,490 1040,560 1100,635 1150,635 1190,655 1240,660 1290,645 1340,645 1410,685 c 52,437 100,440 200,415 270,360 340,338 380,330 460,270 540,258 590,270 625,268 665,240 760,207 820,245 890,370 950,520 1000,680 1018,720'],
    [PINK, 2, 'a 20,203 78,200 100,320 130,430 165,467 190,440 220,330 268,225 320,380 360,540 390,590 420,500 470,380 500,390 540,440 590,330 640,285 660,310 690,460 740,550 765,555 800,460 850,398 900,395 925,373 985,378 1000,410 1040,372 1105,362 1135,412 1170,405 1230,280 1245,290 1290,272 1325,305 b 72,580 130,420 210,370 290,380 360,318 425,390 460,335 475,368 500,378 545,420 575,370 650,370 690,280 705,130 730,50 790,20 835,110 880,225 920,380 950,470 1020,560 1060,660 1105,700 1140,670 1230,650 1300,565 1360,580 1420,655 c 50,395 100,395 190,370 260,280 310,230 380,243 460,165 540,165 590,210 625,220 690,130 770,117 800,140 850,270 910,450 960,640 1000,820 1018,872'],
    [PINK, 2, 'a 20,378 65,345 80,430 110,560 160,625 205,560 230,450 265,420 300,470 330,560 360,720 398,770 420,700 450,575 480,540 510,560 555,590 600,460 650,410 680,520 710,640 735,682 765,680 800,620 860,485 900,485 985,450 995,590 1010,630 1030,605 1045,615 1080,530 1140,535 1180,490 1215,430 1290,400 1330,435 b 100,670 140,560 215,495 280,550 320,545 350,507 400,560 460,595 545,608 570,580 640,550 690,460 710,350 750,200 790,145 820,270 870,350 890,400 920,540 955,630 1000,670 1060,820 1100,830 1120,820 1155,770 1190,765 1280,705 1300,728 1350,720 1410,770 c 100,505 130,480 210,440 260,350 310,320 390,335 450,293 540,285 590,328 640,330 690,265 770,230 800,260 850,430 900,610 950,800 1000,1080 1018,1135']
];

const ZIGZAG = 'd 18,147 845,147 858,208 870,147 1007,147 1020,92 1034,147 1147,147 1158,92 1197,92 1210,147 1334,147 1346,92 1360,92 1372,147 e 108,147 123,92 170,92 186,147 334,147 349,208 363,147 438,147 453,207 468,207 484,147 1230,147 1245,92 1260,147 1275,92 1290,147 1365,147 1380,207 1498,207 1510,152';

const RSI_SLOW = `r d 18,383 105,390 155,397|b d 155,397 215,395|r d 215,390 240,390 300,403 335,406|b d 335,406 400,403|r d 400,403 455,403|b d 455,403 520,395 555,395|r d 555,395 575,400 660,408|b d 660,408 690,403 790,403|r d 790,403 990,403|b d 990,403 1075,395|r d 1075,395 1140,397|b d 1140,397 1190,390 1250,388|r d 1250,388 1300,390|b d 1300,390 1350,390|r d 1350,390 1470,390 1505,397 e 70,397|b e 70,397 165,385 225,383|r e 225,383 320,393 400,403 470,412 660,412|b e 660,408 700,406|r e 700,403 760,412 840,412|b e 840,410 940,406 1000,397 1105,390|r e 1105,390 1180,390 1240,397|b e 1240,390 1315,390|r e 1315,390 1390,400 1450,415 1513,427`;

const RSI_FAST = `b d 18,432 35,425 52,402|r d 52,402 68,480 92,517 105,491 130,490|b d 130,490 145,440 170,400 185,345 215,322|r d 217,310 232,380 260,470 295,530 320,495 332,485|b d 332,485 345,410 378,340 402,365|r d 402,365 420,405 458,445|b d 458,445 475,360 490,340 515,360|r d 515,360 530,372|b d 530,372 543,350|r d 543,350 557,352 570,440 583,487 615,492 635,455|b d 635,455 660,420 680,380 693,333 740,372|r d 740,372 757,392|b d 757,392 770,370 790,365|r d 790,365 808,400 820,380|b d 820,390 843,370|k d 843,370 858,450|r d 858,450 868,405|b d 868,405 880,375|k d 880,375 893,425|r d 893,428 905,428|b d 905,428 920,395|r d 932,385 960,438 972,438|b d 972,438 1000,385 1020,370 1043,320|r d 1043,320 1060,385 1075,395|b d 1075,395 1097,378|k d 1097,378 1110,395|r d 1110,400 1120,432 1135,432|b d 1135,432 1158,345 1180,315 1195,298 1205,330|r d 1205,330 1240,372|b d 1240,372 1257,350 1270,380|r d 1270,380 1298,412 1320,390|b d 1320,390 1335,362 1345,385|r d 1358,365 1372,405 1395,438 1425,438|b d 1425,438 1433,378 1445,420|r d 1445,420 1455,432 1490,438 1500,425|b d 1500,425 1522,382 1540,400 e 0,410 18,380 40,400|r e 40,400 65,410|b e 65,410 100,380 130,345 153,270 180,322 212,322|r e 212,322 232,345 245,435 262,468 305,455 345,530 365,535 380,487|b e 380,487 390,470 410,480 422,465|r e 422,465 455,518 470,495|b e 470,495 485,475 512,465 530,405 555,400 575,427 590,425 617,390 635,410 650,385 665,380 675,355|r e 675,350 692,412 735,405 770,457 787,455 800,420|b e 800,420 810,397 825,395|r e 825,390 842,430|b e 842,430 870,390 895,370 922,370 940,330 955,290 975,285 988,315|r e 988,315 1030,382 1052,380|b e 1052,380 1065,335 1095,280 1108,300|r e 1108,300 1125,370 1180,425 1203,475 1215,430 1233,405|b e 1233,405 1243,350 1258,338 1275,365 1305,372 1318,350|r e 1318,350 1340,410 1378,525 1410,580 1440,590 1485,625 1498,610|b e 1498,610 1505,570 1513,535`;

// from, to, top
const HISTOGRAM = {
    m: 'd 20 1568 733 d 850 862 703 d 862 875 710 d 875 900 717 d 900 980 727 e 0 1519 733 e 445 488 726 e 1370 1400 726 e 1400 1445 714 e 1445 1460 708 e 1460 1475 684 e 1475 1490 672 e 1490 1519 664',
    c: 'd 185 247 733 d 485 500 733 d 548 560 733 e 116 145 733 e 145 160 726 e 160 205 720 e 205 235 708 e 235 250 720 e 250 325 726 e 325 340 733 e 668 683 733 e 937 967 733 e 967 997 726 e 997 1027 733 e 1058 1071 733 e 1071 1115 726 e 1115 1160 733 e 1237 1340 726'
};

const SYMBOLS = `AUDCAD AUDCHF AUDJPY AUDNZD AUDUSD CADCHF CADJPY CHFJPY EURAUD EURCAD EURCHF EURGBP EURJPY EURNZD EURUSD
GBPCHF GBPJPY GBPUSD NZDJPY NZDUSD USDCHF USDCAD USDJPY GBPCAD USDPLN VOLKSWAGON ADIDAS SHELL VODAPHONE FACEBOOK
GOOGLE APPLE AMAZON EURMXN AUDSGD EURCZK EURHUF EURNOK EURPLN EURSEK EURSGD EURTRY EURZAR GBPAUD GBPPLN
GBPNZD GBPSEK GBPSGD NZDCAD NZDCHF NZDSGD USDCNH USDCZK USDHKD USDHUF USDNOK USDSEK USDSGD USDTRY USDZAR
USDMXN USDDKK USDRUB USDTHB USDBRL GBPDKK EURDKK CHFSGD GBPMXN GBPTRY USDKRW USDINR XAUUSD XAUAUD XAUEUR
XAGAUD XAGUSD XPTUSD XPDUSD AUS200 US30 EURO50 SPA35 FRA40 GER40 HK50 JP225 US500 UK100 US100
CHINA50 INDIA50 ITA40 VIX USDX WTI XTIUSD XBRUSD XNGUSD COFFEE COCOA SOYBEANS CORN WHEAT BTCUSD
BCHUSD ETHUSD LTCUSD ADAUSD DOGUSD DOTUSD EOSUSD LNKUSD RPLUSD XLMUSD SOLUSD XAGEUR GILT US10YR BWPUSD
USDKES USDUGX USDCLP USDCOP USDTWD USDZMW`.split(/\s+/);
const PERIODS = ['M1', 'M5', 'M15', 'M30', 'H1', 'H4', 'D1', 'W1', 'MN1'];

function add(parent, name, attrs) {
    const el = document.createElementNS(SVG, name);
    for (const key in attrs) el.setAttribute(key, attrs[key]);
    parent.appendChild(el);
    return el;
}

function toPoints(text) {
    let part;
    const points = [];
    for (const word of text.split(' ')) {
        if (PARTS[word]) {
            part = PARTS[word];
            continue;
        }
        const [x, y] = word.split(',').map(Number);
        points.push(Math.round(part[0] + x / part[2]) + ',' + Math.round(part[1] + y / part[3]));
    }
    return points.join(' ');
}

function drawLine(parent, color, width, text) {
    add(parent, 'polyline', { class: 'series', points: toPoints(text), stroke: color, 'stroke-width': width });
}

function drawCandles() {
    const parent = document.getElementById('candles');
    let x = 11;
    for (const part in BARS) {
        const [, top, , unit] = PARTS[part];
        for (const bar of BARS[part].split('|')) {
            const [type, ...values] = bar.split(' ');
            const [high, a, b, low] = values.map(v => Math.round(top + v / unit));
            add(parent, 'rect', { x: x - 1, y: high, width: 2, height: low - high, class: type === 'n' ? 'doji' : 'wick' });
            if (type === 'w') {
                add(parent, 'rect', { x: x - 2, y: a + 1, width: 4, height: Math.max(b - a - 2, 2), class: 'bull' });
            } else {
                add(parent, 'rect', { x: x - 3, y: a, width: 6, height: Math.max(b - a, 2), class: type === 'n' ? 'doji' : 'bear' });
            }
            x += 8;
        }
    }
}

function drawRsi() {
    const parent = document.getElementById('rsi');
    const colors = { r: RED, b: BLUE, k: '#000' };
    for (const line of (RSI_SLOW + '|' + RSI_FAST).split('|')) {
        drawLine(parent, colors[line[0]], line[0] === 'k' ? 2 : 5, line.slice(2));
    }
    for (const y of [1323, 1339, 1357, 1375, 1391]) {
        add(parent, 'path', { d: `M11 ${y}H2475`, stroke: '#000', 'stroke-width': 2, 'stroke-dasharray': '6 6' });
    }
}

function drawHistogram() {
    const parent = document.getElementById('kiosotto');
    const colors = { m: PINK, c: '#28ffff' };
    for (const key in HISTOGRAM) {
        const words = HISTOGRAM[key].split(' ');
        for (let i = 0; i < words.length; i += 4) {
            const part = PARTS[words[i]];
            const left = part[0] + words[i + 1] / part[2];
            const right = part[0] + words[i + 2] / part[2];
            const y = Math.round(part[1] + words[i + 3] / part[3]);
            add(parent, 'rect', { x: left, y: y, width: right - left, height: 1466 - y, fill: colors[key] });
        }
    }
    add(parent, 'path', { d: 'M11 1447H2475', stroke: '#000', 'stroke-width': 2 });
}

function addButton(label, className) {
    const button = document.createElement('button');
    const text = document.createElement('span');
    text.textContent = label;
    button.className = className;
    button.appendChild(text);
    document.getElementById('symbols').appendChild(button);
}

drawCandles();
for (const [color, width, text] of AVERAGES) {
    drawLine(document.getElementById('averages'), color, width, text);
}
drawLine(document.getElementById('zigzag'), '#000', 2, ZIGZAG);
drawRsi();
drawHistogram();

for (const name of SYMBOLS) {
    addButton(name, name === 'NZDJPY' ? 'active' : '');
}
PERIODS.forEach((name, i) => {
    addButton(name, 'period' + (i === 0 ? ' first-period' : '') + (name === 'M5' ? ' active' : ''));
});

const priceAxis = document.getElementById('priceAxis');
for (let price = 84090; price >= 83050; price -= 65) {
    const label = document.createElement('span');
    label.className = 'price-label';
    label.textContent = (price / 1000).toFixed(3);
    priceAxis.appendChild(label);
}
```
